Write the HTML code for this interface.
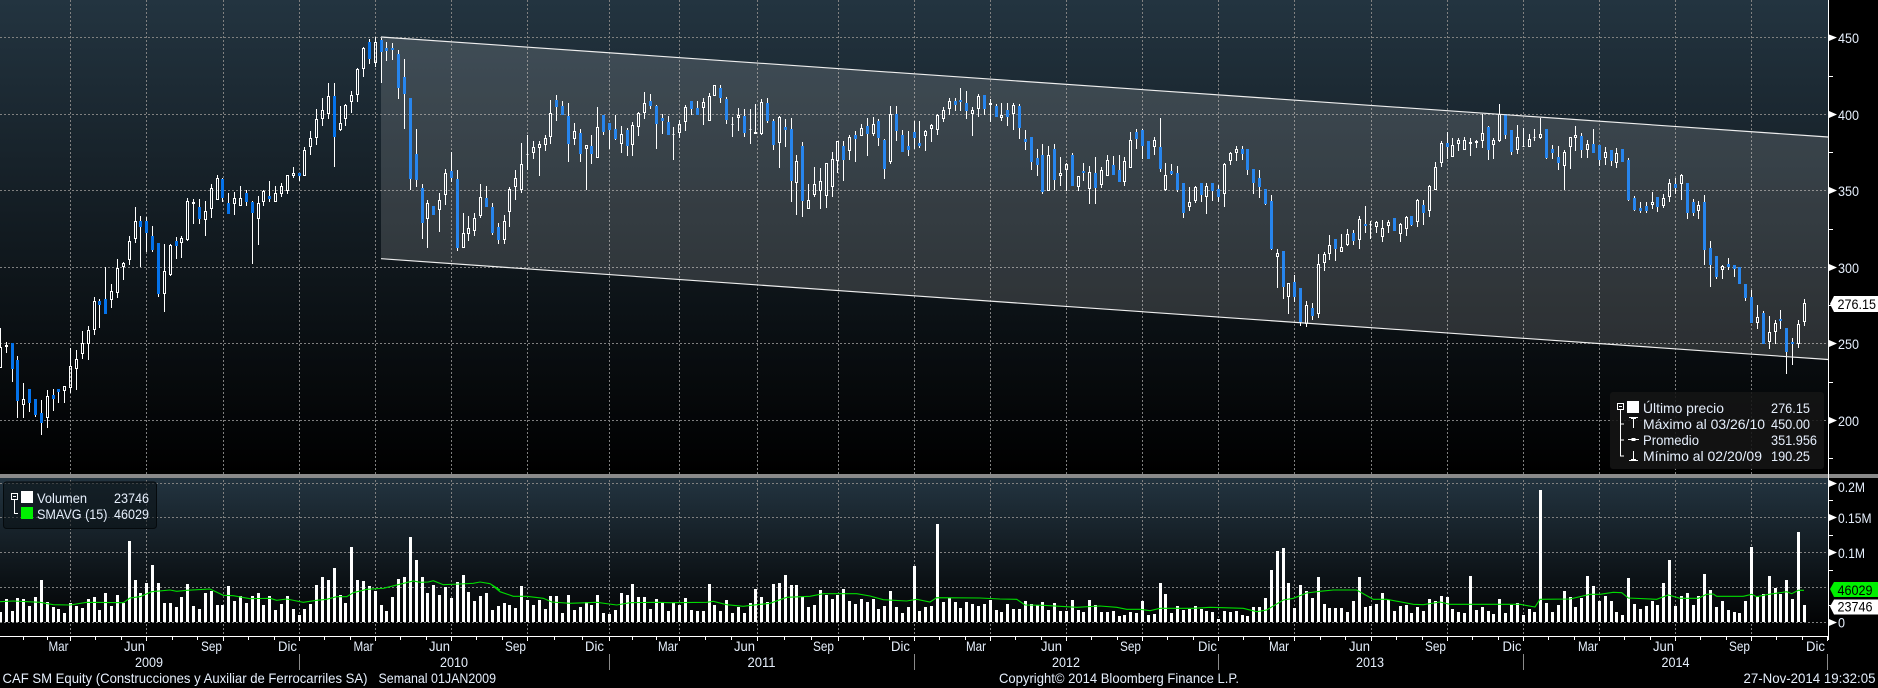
<!DOCTYPE html>
<html><head><meta charset="utf-8"><title>CAF SM Equity</title>
<style>
html,body{margin:0;padding:0;background:#000;overflow:hidden}
svg{display:block}
text{font-family:"Liberation Sans",sans-serif;font-size:14px;fill:#e6effc}
</style></head><body>
<svg xmlns="http://www.w3.org/2000/svg" width="1878" height="688" viewBox="0 0 1878 688">
<defs>
<linearGradient id="a" x1="0" y1="0" x2="0" y2="1"><stop offset="0" stop-color="#233440"/><stop offset="1" stop-color="#000"/></linearGradient>
</defs>
<rect width="1878" height="688" fill="#000"/>
<rect x="0" y="0" width="1828" height="474" fill="url(#a)"/>
<rect x="0" y="478" width="1828" height="155" fill="url(#a)"/>
<g id="grid" shape-rendering="crispEdges"></g>
<g id="vol" shape-rendering="crispEdges"></g>
<polyline id="sma" fill="none" stroke="#00dc00" stroke-width="1.1"/>
<g id="cand" shape-rendering="crispEdges"></g>
<polygon points="381,37 1828,137 1828,359.5 381,258.7" fill="#fff" fill-opacity=".14"/>
<path d="M381 37L1828 137M381 258.7L1828 359.5" stroke="#eee" stroke-width="1.15" fill="none"/>
<g shape-rendering="crispEdges">
<rect x="0" y="474" width="1878" height="4" fill="#8a8a8a"/>
<rect x="1828" y="0" width="1" height="640" fill="#fff"/>
<rect x="0" y="636" width="1828" height="1" fill="#fff"/>
<g fill="#8a8a8a"><rect x="299" y="654" width="1" height="16"/><rect x="609" y="654" width="1" height="16"/><rect x="914" y="654" width="1" height="16"/><rect x="1218" y="654" width="1" height="16"/><rect x="1523" y="654" width="1" height="16"/><rect x="1827" y="654" width="1" height="16"/></g>
<g fill="#fff"><rect x="1829" y="76" width="4" height="1"/><rect x="1829" y="152" width="4" height="1"/><rect x="1829" y="229" width="4" height="1"/><rect x="1829" y="305" width="4" height="1"/><rect x="1829" y="382" width="4" height="1"/><rect x="1829" y="458" width="4" height="1"/><rect x="1829" y="500" width="4" height="1"/><rect x="1829" y="535" width="4" height="1"/><rect x="1829" y="570" width="4" height="1"/><rect x="1829" y="605" width="4" height="1"/></g>
</g>
<g fill="#fff">
<polygon points="1829,34.5 1837,37.5 1829,41"/><polygon points="1829,111 1837,114.5 1829,118"/><polygon points="1829,187 1837,190.5 1829,194"/><polygon points="1829,264 1837,267.5 1829,271"/><polygon points="1829,340 1837,343.5 1829,347"/><polygon points="1829,417 1837,420.5 1829,424"/>
<polygon points="1829,480 1837,483.5 1829,487"/><polygon points="1829,514 1837,517.5 1829,521"/><polygon points="1829,549 1837,552.5 1829,556"/><polygon points="1829,619 1837,622.5 1829,626"/>
</g>
<text x="1838" y="43" textLength="21" lengthAdjust="spacingAndGlyphs">450</text>
<text x="1838" y="120" textLength="21" lengthAdjust="spacingAndGlyphs">400</text>
<text x="1838" y="196" textLength="21" lengthAdjust="spacingAndGlyphs">350</text>
<text x="1838" y="273" textLength="21" lengthAdjust="spacingAndGlyphs">300</text>
<text x="1838" y="349" textLength="21" lengthAdjust="spacingAndGlyphs">250</text>
<text x="1838" y="426" textLength="21" lengthAdjust="spacingAndGlyphs">200</text>
<text x="1838" y="492" textLength="27" lengthAdjust="spacingAndGlyphs">0.2M</text>
<text x="1838" y="523" textLength="33.5" lengthAdjust="spacingAndGlyphs">0.15M</text>
<text x="1838" y="558" textLength="27" lengthAdjust="spacingAndGlyphs">0.1M</text>
<text x="1838" y="627.5" textLength="7" lengthAdjust="spacingAndGlyphs">0</text>
<polygon points="1830,304 1834,296 1878,296 1878,312 1834,312" fill="#fff"/>
<text x="1837.5" y="309" textLength="38.5" lengthAdjust="spacingAndGlyphs" style="fill:#000">276.15</text>
<polygon points="1830,589 1834,582 1878,582 1878,597 1834,597" fill="#00f000"/>
<text x="1837.5" y="595" textLength="35" lengthAdjust="spacingAndGlyphs" style="fill:#000">46029</text>
<polygon points="1830,606.5 1834,599.5 1878,599.5 1878,614.5 1834,614.5" fill="#fff"/>
<text x="1837.5" y="611.5" textLength="35" lengthAdjust="spacingAndGlyphs" style="fill:#000">23746</text>

<rect x="1610" y="392" width="214" height="77" rx="3" fill="#141414" fill-opacity=".88"/>
<g shape-rendering="crispEdges">
<rect x="1627" y="401" width="12" height="12" fill="#fff"/>
<rect x="1617.5" y="403.5" width="6" height="6" fill="none" stroke="#fff"/>
<rect x="1619" y="406" width="3" height="1" fill="#fff"/>
<path d="M1620.5 410V456H1624M1620.5 424H1624M1620.5 440H1624" fill="none" stroke="#fff"/>
<path d="M1633.5 417V428M1633.5 451V460M1628 439.5H1639" fill="none" stroke="#fff"/>
<rect x="1629" y="417" width="9" height="1" fill="#fff"/>
<rect x="1629" y="460" width="9" height="1" fill="#fff"/>
<rect x="1631" y="459" width="5" height="1" fill="#fff"/>
<rect x="1631" y="418" width="5" height="1" fill="#fff"/>
<rect x="1631.5" y="438" width="4" height="3" fill="#fff"/>
</g>
<text x="1643" y="413" textLength="81" lengthAdjust="spacingAndGlyphs">Último precio</text>
<text x="1643" y="429" textLength="122" lengthAdjust="spacingAndGlyphs">Máximo al 03/26/10</text>
<text x="1643" y="445" textLength="56" lengthAdjust="spacingAndGlyphs">Promedio</text>
<text x="1643" y="461" textLength="119" lengthAdjust="spacingAndGlyphs">Mínimo al 02/20/09</text>
<text x="1771" y="413" textLength="39" lengthAdjust="spacingAndGlyphs">276.15</text>
<text x="1771" y="429" textLength="39" lengthAdjust="spacingAndGlyphs">450.00</text>
<text x="1771" y="445" textLength="46" lengthAdjust="spacingAndGlyphs">351.956</text>
<text x="1771" y="461" textLength="39" lengthAdjust="spacingAndGlyphs">190.25</text>

<rect x="3.5" y="482" width="153" height="46.5" rx="3" fill="#0a1014" fill-opacity=".55" stroke="#050a0d"/>
<g shape-rendering="crispEdges">
<rect x="21" y="491" width="12" height="12" fill="#fff"/>
<rect x="21" y="507" width="12" height="12" fill="#00f000"/>
<rect x="11.5" y="493.5" width="6" height="6" fill="none" stroke="#fff"/>
<rect x="13" y="496" width="3" height="1" fill="#fff"/>
<path d="M14.5 500V513.5H18" fill="none" stroke="#fff"/>
</g>
<text x="37" y="503" textLength="50" lengthAdjust="spacingAndGlyphs">Volumen</text>
<text x="114" y="503" textLength="35" lengthAdjust="spacingAndGlyphs">23746</text>
<text x="37" y="519" textLength="70.5" lengthAdjust="spacingAndGlyphs">SMAVG (15)</text>
<text x="114" y="519" textLength="35" lengthAdjust="spacingAndGlyphs">46029</text>

<g id="ml">
<text x="48.5" y="651" textLength="20" lengthAdjust="spacingAndGlyphs">Mar</text>
<text x="124" y="651" textLength="21" lengthAdjust="spacingAndGlyphs">Jun</text>
<text x="201" y="651" textLength="21" lengthAdjust="spacingAndGlyphs">Sep</text>
<text x="278" y="651" textLength="19" lengthAdjust="spacingAndGlyphs">Dic</text>
<text x="353.5" y="651" textLength="20" lengthAdjust="spacingAndGlyphs">Mar</text>
<text x="429" y="651" textLength="21" lengthAdjust="spacingAndGlyphs">Jun</text>
<text x="505" y="651" textLength="21" lengthAdjust="spacingAndGlyphs">Sep</text>
<text x="585" y="651" textLength="19" lengthAdjust="spacingAndGlyphs">Dic</text>
<text x="658" y="651" textLength="20" lengthAdjust="spacingAndGlyphs">Mar</text>
<text x="734" y="651" textLength="21" lengthAdjust="spacingAndGlyphs">Jun</text>
<text x="813" y="651" textLength="21" lengthAdjust="spacingAndGlyphs">Sep</text>
<text x="891" y="651" textLength="19" lengthAdjust="spacingAndGlyphs">Dic</text>
<text x="966" y="651" textLength="20" lengthAdjust="spacingAndGlyphs">Mar</text>
<text x="1041" y="651" textLength="21" lengthAdjust="spacingAndGlyphs">Jun</text>
<text x="1120" y="651" textLength="21" lengthAdjust="spacingAndGlyphs">Sep</text>
<text x="1198" y="651" textLength="19" lengthAdjust="spacingAndGlyphs">Dic</text>
<text x="1269" y="651" textLength="20" lengthAdjust="spacingAndGlyphs">Mar</text>
<text x="1349" y="651" textLength="21" lengthAdjust="spacingAndGlyphs">Jun</text>
<text x="1425" y="651" textLength="21" lengthAdjust="spacingAndGlyphs">Sep</text>
<text x="1502.5" y="651" textLength="19" lengthAdjust="spacingAndGlyphs">Dic</text>
<text x="1578" y="651" textLength="20" lengthAdjust="spacingAndGlyphs">Mar</text>
<text x="1653" y="651" textLength="21" lengthAdjust="spacingAndGlyphs">Jun</text>
<text x="1729" y="651" textLength="21" lengthAdjust="spacingAndGlyphs">Sep</text>
<text x="1806" y="651" textLength="19" lengthAdjust="spacingAndGlyphs">Dic</text>
</g>
<text x="135" y="667" textLength="28" lengthAdjust="spacingAndGlyphs">2009</text>
<text x="440" y="667" textLength="28" lengthAdjust="spacingAndGlyphs">2010</text>
<text x="747.5" y="667" textLength="28" lengthAdjust="spacingAndGlyphs">2011</text>
<text x="1052" y="667" textLength="28" lengthAdjust="spacingAndGlyphs">2012</text>
<text x="1356" y="667" textLength="28" lengthAdjust="spacingAndGlyphs">2013</text>
<text x="1661.5" y="667" textLength="28" lengthAdjust="spacingAndGlyphs">2014</text>
<text x="2.5" y="683" textLength="365" lengthAdjust="spacingAndGlyphs">CAF SM Equity (Construcciones y Auxiliar de Ferrocarriles SA)</text>
<text x="378.5" y="683" textLength="117.5" lengthAdjust="spacingAndGlyphs">Semanal 01JAN2009</text>
<text x="999" y="683" textLength="240" lengthAdjust="spacingAndGlyphs">Copyright© 2014 Bloomberg Finance L.P.</text>
<text x="1743.5" y="683" textLength="132" lengthAdjust="spacingAndGlyphs">27-Nov-2014 19:32:05</text>
</svg>
<script>
(function(){
var X=function(i){return Math.floor(0.4+5.857*i)};
var segs=[
[0,"W 985 1040 1105 1105,W 1027 1036 1040 1058,B 1030 1030 1106 1145,B 1068 1080 1203 1253,W 1150 1198 1216 1253,B 1167 1167 1208 1236,B 1197 1197 1245 1250,B 1200 1240 1268 1304,W 1170 1189 1253 1283,B 1167 1185 1197 1232,B 1167 1167 1176 1208,W 1158 1159 1172 1208,W 1045 1098 1163 1178,W 1050 1078 1106 1169,W 993 1030 1061 1076,W 979 991 1031 1079,W 892 904 991 1004,B 898 904 915 983,B 802 898 941 941,W 853 874 899 923,W 778 805 878 893,W 785 790 802 839,W 708 724 779 796,W 621 664 716 728,B 648 664 680 802,B 650 664 698 757,B 679 709 750 756,B 729 729 881 890,W 733 814 881 935,W 733 736 824 828,B 712 724 737 777,W 708 715 729 774,W 594 604 720 723,W 598 607 613 672,B 598 622 656 672,W 604 634 659 708,W 553 565 628 654,W 526 535 601 601,B 533 538 593 606,B 580 610 641 641,W 576 595 611 644,W 559 595 617 617,B 571 580 605 617,B 604 606 639 792,W 589 610 656 735,W 571 572 605 617,B 544 587 597 605,W 559 580 605 605,W 549 559 581 590,W 526 526 572 582,W 502 519 527 533,B 519 519 527 544,W 442 451 527 527,W 393 415 440 465,W 328 358 413 435,W 294 331 356 378,W 250 289 341 357,B 250 289 410 501,W 319 370 389 392,W 311 316 356 378,W 274 286 305 340,W 205 208 284 306,W 140 145 208 231,B 117 127 177 192,W 110 127 188 202,B 113 120 155 249,B 127 144 153 183,B 130 144 150 180,B 150 163 263 297,B 178 232 281 387,B 295 295 537 570,B 388 463 540 561,B 553 565 669 717,W 601 610 656 744"],
[30,"B 528 528 555 555,W 490 511 539 605,W 418 430 494 524,B 367 424 444 457,B 421 447 654 662,W 549 610 653 653,W 558 595 613 632,W 549 565 602 617,W 462 502 558 563,B 468 504 531 531,B 519 531 610 615,B 579 591 630 642,W 555 574 629 642,W 472 478 545 590,W 420 445 470 510,W 339 403 480 488,W 316 371 376 420,W 334 352 368 387,W 333 343 353 438,W 314 325 344 362,W 210 250 320 342,B 196 210 231 272,B 213 228 255 255,B 220 258 342 396,W 280 304 326 345,B 298 310 372 396,W 345 346 358 480,B 316 348 372 402,W 232 292 383 383,B 255 255 306 315,B 279 279 300 358,B 255 297 327 330,W 288 313 341 369,B 294 300 348 378,W 277 286 344 378,W 246 250 292 318,W 186 220 248 267,B 192 213 228 237,B 226 228 282 357,B 252 264 273 312,B 258 276 315 315,W 292 313 316 390,W 270 283 308 323,W 225 231 277 303,B 213 213 237 255,B 213 234 255 255,W 204 217 235 285,W 190 199 272 272,W 166 166 199 199,B 166 174 204 219,B 202 207 270 282,W 262 282 285 321,W 235 256 265 303,B 238 258 309 321,W 238 297 299 342,W 222 307 311 313,W 208 217 311 315,B 205 219 273 279,B 268 273 345 360,W 259 262 339 414,B 267 292 300 351,B 264 297 453 516,W 375 394 460 555,B 337 348 513 561,W 462 511 536 536,W 411 463 495 501,W 414 454 482 537,W 400 400 497 534,W 366 388 471 501,W 334 334 392 429,B 334 348 390 453,W 316 322 362 390,B 303 315 327 396,W 282 295 318 318"],
[70,"B 145 168 192 258,W 141 163 192 198,B 147 153 204 228,B 208 210 297 327,W 109 133 276 282,B 109 132 183 213,B 181 195 246 246,B 183 228 240 258,B 153 186 204 238,B 153 219 228 234,W 181 184 197 243,W 163 166 178 216,W 132 136 179 195,W 112 121 147 155,W 84 94 116 135,B 84 93 105 124,B 55 90 96 123,B 64 99 123 147,W 112 121 133 198,W 73 79 116 141,B 76 76 117 135,W 88 99 104 156,B 103 108 141 141,W 99 136 144 153,B 99 120 141 168,W 99 105 132 180,B 102 108 174 207,B 181 207 216 240,B 201 201 276 300,B 238 264 285 318,B 222 255 366 372,W 229 255 362 362,B 222 237 330 360,W 262 310 317 348,W 279 283 299 363,B 250 255 348 348,W 318 319 351 363,B 280 303 309 333,W 289 307 357 402,B 262 309 354 402,W 292 301 345 354,W 255 271 317 318,B 259 285 315 315,B 255 300 336 336,W 262 274 335 348,W 186 211 293 293,B 178 186 207 237,B 178 180 228 267,B 213 213 267 267,W 202 211 231 255,B 145 232 297 306,W 279 316 360 362,B 282 304 312 316,B 289 309 360 366,B 339 339 429 444,W 352 397 411 423,W 349 351 393 399,B 339 339 375 396,W 340 349 381 432,B 339 339 363 393,B 346 357 381 396,W 280 283 372 411,W 246 250 273 285,W 229 238 249 273,B 228 237 252 270,B 237 237 300 315,B 297 297 339 372,B 300 324 351 384,B 357 357 402 405,B 375 393 537 540,W 537 549 561 654,B 543 543 651 687,W 640 640 682 732,B 615 636 681 696,B 654 654 756 768,W 693 705 762 771,B 699 714 738 750,W 552 583 732 744,W 546 552 578 603,W 495 526 552 570,B 507 507 537 573,W 492 531 546 546,W 477 492 525 528"],
[90,"B 420 429 453 465,W 378 387 449 477,B 348 402 408 429,W 393 402 405 447,W 393 396 411 429,W 390 415 441 456,W 390 397 407 429,B 384 384 423 423,W 400 403 431 456,W 378 381 418 438,B 378 378 405 408,W 327 330 396 411,B 330 346 369 405,W 285 288 362 381,W 216 232 300 300,W 153 159 218 232,B 126 159 171 207,W 144 166 201 201,W 144 151 163 183,W 141 151 180 180,W 144 156 161 198,W 150 154 158 174,W 72 130 153 174,B 108 111 180 210,W 144 150 164 207,W 42 72 153 156,B 72 72 135 147,B 120 120 186 195,W 105 141 180 192,W 114 168 170 171,W 132 147 170 171,W 117 141 144 153,W 84 133 145 148,B 117 117 205 207,B 165 177 189 207,B 168 201 219 240,W 180 186 228 300,W 141 141 171 237,W 108 136 144 183,B 129 138 180 204,W 150 163 180 204,B 117 162 189 189,B 165 165 210 228,W 171 186 204 225,B 180 180 213 228,W 174 189 219 234,B 177 177 216 216,B 204 210 330 333,B 318 324 360 363,B 336 354 363 369,B 336 348 363 369,W 306 337 345 357,B 321 321 351 366,W 312 324 348 354,W 267 280 321 336,B 264 282 294 312,W 252 255 282 330,B 279 279 369 387,B 327 336 369 378,W 333 346 363 387,B 315 336 480 525,B 453 474 525 591,B 498 498 561 567,W 525 528 540 567,B 504 522 531 540,B 525 525 537 561,B 531 531 582 582,B 582 582 624 633,B 600 621 699 699,W 645 681 699 717,B 663 669 762 762,W 678 726 756 777,W 690 699 726 762,B 660 687 693 717,B 714 714 786 852,B 744 756 762 825,W 690 702 762 774,W 627 640 696 708"]
];
var wick="",white="",blue="",i=0;
segs.forEach(function(s){s[1].split(",").forEach(function(r){
 var p=r.split(" "),x=X(i),f=function(v){return Math.round(s[0]+v/3)};
 var hi=f(p[1]),t=f(p[2]),b=f(p[3]),lo=f(p[4]);
 if(b<=t)b=t+1;
 if(t>hi)wick+="M"+(x+.5)+" "+hi+"V"+t;
 if(lo>b)wick+="M"+(x+.5)+" "+b+"V"+lo;
 if(p[0]=="W"){white+="M"+(x-.5)+" "+(t+.5)+"h2V"+(b-.5)+"h-2z";}
 else{blue+="M"+(x-1)+" "+t+"h3V"+b+"h-3z";}
 i++;
})});
document.getElementById("cand").innerHTML='<path d="'+wick+'" stroke="#fff" fill="none"/><path d="'+white+'" stroke="#fff" fill="none"/><path d="'+blue+'" fill="#0472ea"/>';
var v="426 387 423 384 387 408 381 330 396 411 417 429 399 408 414 387 381 420 369 408 375 399 213 330 369 339 285 339 399 399 411 381 342 408 417 369 363 405 405 348 393 378 399 378 369 405 378 420 402 378 417 435 417 402 345 321 330 294 375 399 231 330 333 348 363 405 423 381 327 321 201 270 321 369 345 375 351 384 336 315 366 393 378 369 420 408 399 405 414 348 390 405 390 417 378 378 429 375 420 411 396 405 375 429 432 420 369 375 342 381 381 417 387 396 423 399 405 384 420 423 423 342 405 423 390 429 411 429 399 357 381 396 342 339 315 345 345 381 411 405 360 375 387 375 357 393 402 387 396 387 417 408 363 411 429 411 288 423 411 408 162 396 384 396 414 396 402 408 402 390 420 426 402 417 417 393 402 405 396 420 399 423 423 390 420 426 390 405 426 426 423 438 435 426 429 393 435 432 339 372 429 408 420 417 408 417 423 426 447 423 426 423 435 438 411 411 384 300 243 234 339 414 345 363 384 321 402 414 414 414 426 393 321 411 408 402 369 390 423 408 405 429 411 423 387 393 378 381 417 426 429 318 420 411 423 432 387 429 405 399 435 417 426 60 399 426 405 363 381 411 384 318 348 393 378 393 426 435 324 402 417 408 393 405 339 270 408 378 369 405 378 312 360 411 393 420 426 429 393 231 381 372 318 354 372 330 387 186 405".split(" ");
var vp="";
v.forEach(function(t,j){var y=Math.round(470+t/3);vp+="M"+(X(j)-1)+" "+y+"h3V622h-3z"});
document.getElementById("vol").innerHTML='<path d="'+vp+'" fill="#fff"/>';
var sm=[[0,"0 395 40 393 120 397 160 404 210 405 260 397 370 398 390 384 420 380 455 365 510 360 530 364 560 361 630 357 670 376 700 377 750 386 810 385 830 391 860 387 910 397 950 391 980 388 1010 380 1040 380 1060 368 1100 358 1150 355 1240 333 1260 337 1285 336 1300 332 1330 344 1380 342 1420 340 1440 336 1470 341 1500 360"],[480,"35 345 60 365 100 379 140 379 190 385 215 396 270 400 350 397 410 405 450 398 530 397 570 398 680 397 700 394 740 404 790 409 830 404 870 400 920 382 990 379 1030 371 1130 371 1170 378 1210 389 1280 393 1310 388 1350 396 1370 383 1500 384"],[1000,"0 387 50 388 75 405 130 406 230 412 300 408 350 412 380 418 420 418 450 422 480 415 580 415 630 412 730 415 770 425 800 420 850 390 880 385 920 369 960 364 1000 360 1070 360 1120 388 1160 388 1240 403 1270 404 1320 396 1350 403"],[1500,"0 403 60 403 105 411 120 388 210 387 270 373 300 373 340 367 365 368 385 384 470 388 505 375 540 385 595 385 620 373 640 372 650 379 730 379 755 373 770 380 800 374 860 365 875 371 895 361 912 361"]];
var pts=[];
sm.forEach(function(s){var a=s[1].split(" ");for(var k=0;k<a.length;k+=2)pts.push((s[0]+a[k]/3).toFixed(1)+","+(470+a[k+1]/3).toFixed(1))});
document.getElementById("sma").setAttribute("points",pts.join(" "));
var vx=[70,146,223,299,375,451,527,609,679,757,838,914,990,1066,1142,1218,1294,1371,1447,1523,1599,1675,1751];
var hy=[37,114,190,267,343,420,483,517,552,587,622];
var g="";
vx.forEach(function(x){g+='<path d="M'+(x+.5)+' 0V636" stroke="#808080" stroke-dasharray="2 2"/>'});
hy.forEach(function(y){g+='<path d="M0 '+(y+.5)+'H1828" stroke="#808080" stroke-dasharray="2 2"/>'});
var tk="M23.5 636V640M47.5 636V640";
var ax=vx.concat([1827]);
ax.forEach(function(x,n){tk+="M"+(x+.5)+" 636V641";if(n<ax.length-1){var d=(ax[n+1]-x)/3;tk+="M"+(Math.round(x+d)+.5)+" 636V640M"+(Math.round(x+2*d)+.5)+" 636V640"}});
g+='<path d="'+tk+'" stroke="#fff" fill="none"/>';
document.getElementById("grid").innerHTML=g;
})();
</script>
</body></html>
